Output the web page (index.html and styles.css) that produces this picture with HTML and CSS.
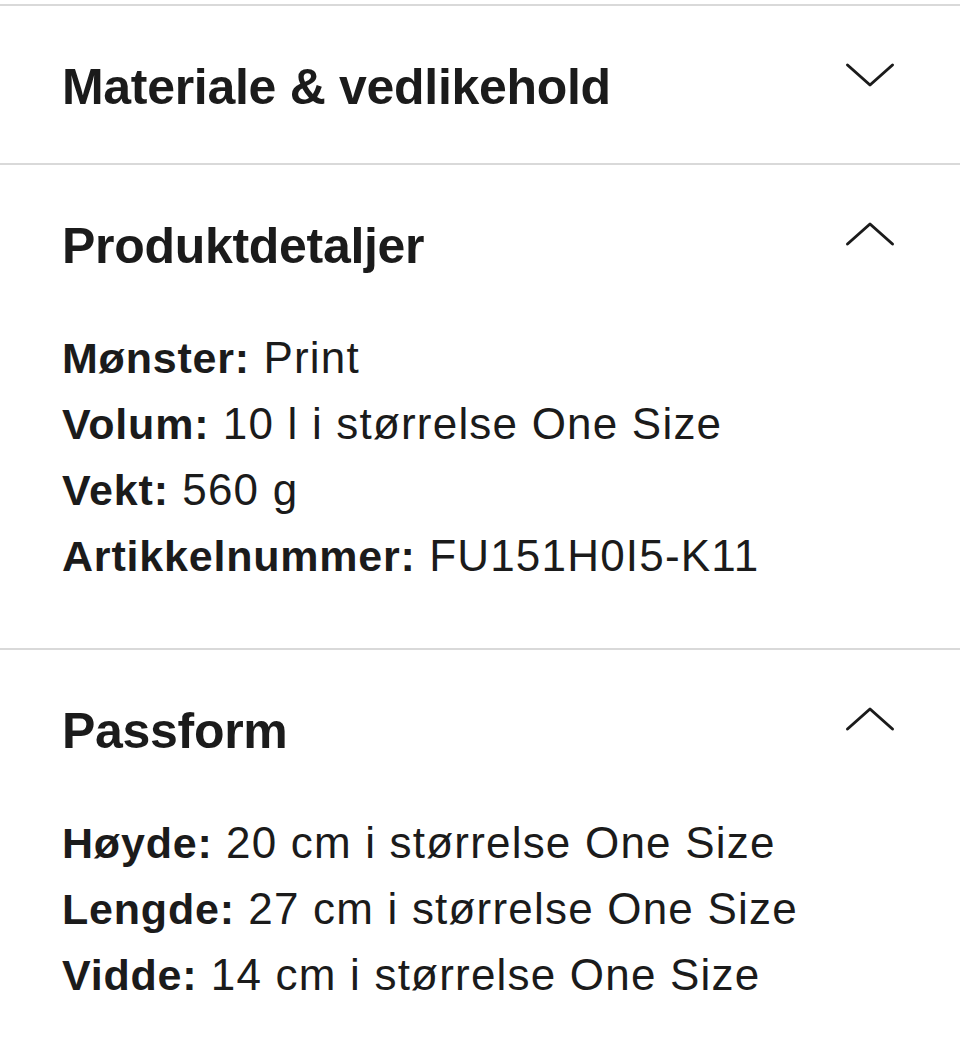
FILE: index.html
```html
<!DOCTYPE html>
<html lang="no">
<head>
<meta charset="utf-8">
<title>Produktinformasjon</title>
<link rel="stylesheet" href="styles.css">
</head>
<body>
<div class="accordion">
  <section class="item">
    <div class="item-head">
      <h2 class="item-title">Materiale &amp; vedlikehold</h2>
      <svg class="chevron" width="50" height="26" viewBox="0 0 50 26" aria-hidden="true"><polyline points="2.5,3 25,23 47.5,3"/></svg>
    </div>
  </section>
  <section class="item">
    <div class="item-head">
      <h2 class="item-title">Produktdetaljer</h2>
      <svg class="chevron" width="50" height="26" viewBox="0 0 50 26" aria-hidden="true"><polyline points="2.5,23 25,3 47.5,23"/></svg>
    </div>
    <div class="item-body">
      <p class="row"><strong>Mønster:</strong> Print</p>
      <p class="row"><strong>Volum:</strong> 10 l i størrelse One Size</p>
      <p class="row"><strong>Vekt:</strong> 560 g</p>
      <p class="row"><strong>Artikkelnummer:</strong> FU151H0I5-K11</p>
    </div>
  </section>
  <section class="item">
    <div class="item-head">
      <h2 class="item-title">Passform</h2>
      <svg class="chevron" width="50" height="26" viewBox="0 0 50 26" aria-hidden="true"><polyline points="2.5,23 25,3 47.5,23"/></svg>
    </div>
    <div class="item-body">
      <p class="row"><strong>Høyde:</strong> 20 cm i størrelse One Size</p>
      <p class="row"><strong>Lengde:</strong> 27 cm i størrelse One Size</p>
      <p class="row"><strong>Vidde:</strong> 14 cm i størrelse One Size</p>
    </div>
  </section>
</div>
</body>
</html>
```
FILE: styles.css
```css
html, body {
  margin: 0;
  padding: 0;
  background: #ffffff;
}

body {
  font-family: "Liberation Sans", Arial, Helvetica, sans-serif;
  color: #1b1b1b;
}

.accordion {
  padding-top: 4px;
}

.item {
  border-top: 2px solid #d9d9d9;
}

.item-head {
  display: flex;
  justify-content: space-between;
  align-items: flex-start;
  padding: 51px 65px 46px 62px;
}

.item-title {
  margin: 0;
  font-size: 50px;
  line-height: 60px;
  font-weight: 700;
  letter-spacing: -0.3px;
}

.chevron {
  display: block;
  margin-top: 5px;
  fill: none;
  stroke: #1b1b1b;
  stroke-width: 3;
  stroke-linecap: round;
  stroke-linejoin: round;
}

.item-body {
  padding: 3px 62px 59px 62px;
}

.row {
  margin: 0;
  font-size: 44px;
  line-height: 66px;
  letter-spacing: 1.2px;
}

.row strong {
  font-size: 43px;
  font-weight: 700;
  letter-spacing: 0.8px;
}
```
